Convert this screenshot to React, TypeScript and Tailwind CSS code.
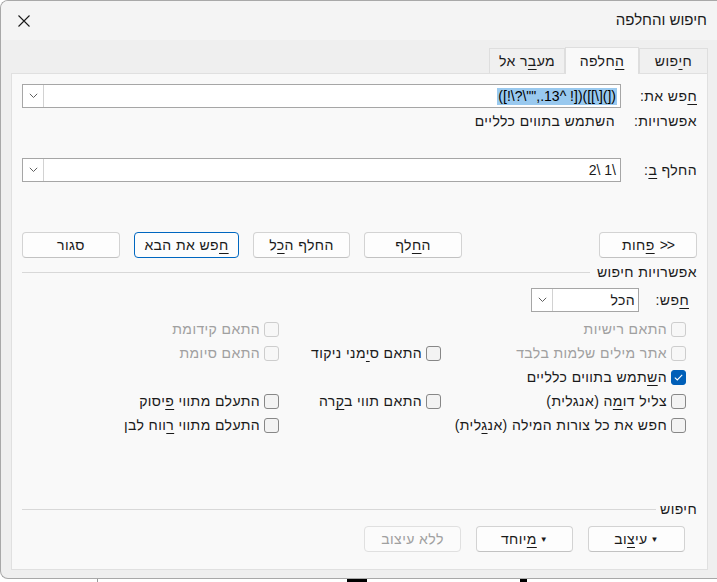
import React from "react";

function U({ children }: { children: React.ReactNode }) {
  return <span className="underline underline-offset-[3px] decoration-1">{children}</span>;
}

function Chevron() {
  return (
    <svg width="9" height="6" viewBox="0 0 9 6" fill="none">
      <path d="M0.8 0.8 L4.5 4.5 L8.2 0.8" stroke="#5f5f5f" strokeWidth="1" />
    </svg>
  );
}

function Combo({ children, className }: { children: React.ReactNode; className: string }) {
  return (
    <div className={`h-[24px] bg-white border border-[#a6a6a6] flex items-stretch ${className}`}>
      <div className="flex-1 flex items-center pr-[3px] overflow-hidden whitespace-nowrap">{children}</div>
      <div className="w-[21px] border-r border-[#d2d2d2] bg-white flex items-center justify-center">
        <Chevron />
      </div>
    </div>
  );
}

function Btn({
  children,
  className,
  focused,
  disabled,
}: {
  children: React.ReactNode;
  className: string;
  focused?: boolean;
  disabled?: boolean;
}) {
  const tone = focused
    ? "border-[#0067c0] bg-[#fdfdfd] text-[#1a1a1a]"
    : disabled
      ? "border-[#e0e0e0] bg-[#fbfbfb] text-[#a0a0a0]"
      : "border-[#d3d3d3] border-b-[#c2c2c2] bg-[#fdfdfd] text-[#1a1a1a]";
  return (
    <div className={`h-[26px] rounded-[4px] border flex items-center justify-center ${tone} ${className}`}>
      <span className="whitespace-nowrap">{children}</span>
    </div>
  );
}

function Check({
  label,
  checked,
  disabled,
}: {
  label: React.ReactNode;
  checked?: boolean;
  disabled?: boolean;
}) {
  const box = checked
    ? "bg-[#005fb8] border-[#005fb8]"
    : disabled
      ? "bg-[#f7f7f7] border-[#cdcdcd]"
      : "bg-[#f3f3f3] border-[#878787]";
  return (
    <div className="h-[24px] flex items-center gap-[4px]">
      <span className={`w-[15px] h-[15px] shrink-0 rounded-[3px] border flex items-center justify-center ${box}`}>
        {checked && (
          <svg width="9" height="7" viewBox="0 0 9 7" fill="none">
            <path d="M0.8 3.6 L3.3 6 L8.2 0.9" stroke="white" strokeWidth="1.1" />
          </svg>
        )}
      </span>
      <span className={`whitespace-nowrap ${disabled ? "text-[#a0a0a0]" : "text-[#1a1a1a]"}`}>{label}</span>
    </div>
  );
}

function Section({ title, gap }: { title: string; gap: string }) {
  return (
    <div className="h-[20px] flex items-center">
      <span className="text-[#1a1a1a]">{title}</span>
      <div className={`flex-1 h-px bg-[#d8d8d8] ${gap}`} />
    </div>
  );
}

export default function App() {
  return (
    <div
      dir="rtl"
      className="w-[717px] h-[582px] bg-white overflow-hidden flex flex-col text-[14px] tracking-[0.4px] font-['Liberation_Sans','DejaVu_Sans',sans-serif]"
    >
      <div className="h-[579px] bg-[#efefef] border border-r-0 border-[#a8a8a8] rounded-l-[8px] flex flex-col overflow-hidden">
        {/* title bar */}
        <div className="h-[39px] bg-[#f4f4f4] flex items-center justify-between pr-[10px] pl-[17px]">
          <span className="text-[15px] tracking-normal text-[#1a1a1a]">חיפוש והחלפה</span>
          <svg width="12" height="12" viewBox="0 0 12 12" fill="none">
            <path d="M0.5 0.5 L11.5 11.5 M11.5 0.5 L0.5 11.5" stroke="#1a1a1a" strokeWidth="1.1" />
          </svg>
        </div>

        {/* tabs */}
        <div className="h-[33px] flex items-end pr-[9px]">
          <div className="w-[69px] h-[25px] border border-b-0 border-[#dedede] bg-[#f0f0f0] flex items-center justify-center text-[#1a1a1a]">
            ח<U>י</U>פוש
          </div>
          <div className="w-[74px] h-[27px] border border-b-0 border-[#dedede] bg-[#f9f9f9] -mb-px relative z-10 flex items-center justify-center text-[#1a1a1a]">
            <U>ה</U>חלפה
          </div>
          <div className="w-[76px] h-[25px] border border-b-0 border-[#dedede] bg-[#f0f0f0] flex items-center justify-center text-[#1a1a1a]">
            מע<U>ב</U>ר אל
          </div>
        </div>

        {/* panel */}
        <div className="flex-1 mr-[9px] ml-[10px] mb-[8px] bg-[#f9f9f9] border border-[#e0e0e0] flex flex-col pr-[10px] pl-[10px] text-[#1a1a1a]">
          <div className="mt-[10px] flex items-center">
            <span className="w-[76px]">
              <U>ח</U>פש את:
            </span>
            <Combo className="flex-1">
              <bdo dir="ltr" className="bg-[#99c9ef] text-black px-px leading-[17px] tracking-normal">
                {'([!\\?\\"",.13^ !])([[\\](])'}
              </bdo>
            </Combo>
          </div>
          <div className="h-[26px] flex items-center">
            <span className="w-[76px]">אפשרויות:</span>
            <span className="pr-[6px]">השתמש בתווים כלליים</span>
          </div>
          <div className="mt-[24px] flex items-center">
            <span className="w-[76px]">
              החלף <U>ב</U>:
            </span>
            <Combo className="flex-1">
              <bdo dir="ltr" className="px-px tracking-normal">
                {"2\\ 1\\"}
              </bdo>
            </Combo>
          </div>

          {/* action buttons */}
          <div className="mt-[50px] flex justify-between">
            <div
              dir="ltr"
              className="w-[98px] h-[26px] rounded-[4px] border border-[#d3d3d3] border-b-[#c2c2c2] bg-[#fdfdfd] text-[#1a1a1a] flex items-center justify-center gap-[5px]"
            >
              <span dir="rtl">
                <U>פ</U>חות
              </span>
              <span className="tracking-[-1px]">{">>"}</span>
            </div>
            <div className="flex gap-[14px]">
              <Btn className="w-[98px]">
                ה<U>ח</U>לף
              </Btn>
              <Btn className="w-[97px]">
                החלף ה<U>כ</U>ל
              </Btn>
              <Btn className="w-[105px]" focused>
                <U>ח</U>פש את הבא
              </Btn>
              <Btn className="w-[98px]">סגור</Btn>
            </div>
          </div>

          <div className="mt-[4px]">
            <Section title="אפשרויות חיפוש" gap="mr-[7px]" />
          </div>

          <div className="mt-[6px] flex items-center pr-[8px]">
            <span className="w-[50px]">
              <U>ח</U>פש:
            </span>
            <Combo className="w-[108px]">
              <span>הכל</span>
            </Combo>
          </div>

          <div className="mt-[5px] mr-[11px] grid grid-cols-[245px_162px_1fr]">
            <Check label="התאם רישיות" disabled />
            <div />
            <Check label="התאם קידומת" disabled />

            <Check label="אתר מילים שלמות בלבד" disabled />
            <Check
              label={
                <>
                  התאם ס<U>י</U>מני ניקוד
                </>
              }
            />
            <Check label="התאם סיומת" disabled />

            <Check
              checked
              label={
                <>
                  ה<U>ש</U>תמש בתווים כלליים
                </>
              }
            />
            <div />
            <div />

            <Check
              label={
                <>
                  צליל דו<U>מ</U>ה (אנגלית)
                </>
              }
            />
            <Check
              label={
                <>
                  התאם תווי ב<U>ק</U>רה
                </>
              }
            />
            <Check
              label={
                <>
                  התעלם מתווי <U>פ</U>יסוק
                </>
              }
            />

            <Check
              label={
                <>
                  חפש את כל צורות המילה (אנ<U>ג</U>לית)
                </>
              }
            />
            <div />
            <Check
              label={
                <>
                  התעלם מתווי <U>ר</U>ווח לבן
                </>
              }
            />
          </div>

          <div className="mt-[62px]">
            <Section title="חיפוש" gap="mr-[4px]" />
          </div>

          <div className="mt-[7px] mr-[12px] flex gap-[15px]">
            <Btn className="w-[97px]">
              <span className="text-[8px] ml-[3px] align-middle">▼</span>
              עי<U>צ</U>וב
            </Btn>
            <Btn className="w-[97px]">
              <span className="text-[8px] ml-[3px] align-middle">▼</span>
              <U>מ</U>יוחד
            </Btn>
            <Btn className="w-[97px]" disabled>
              ללא עיצוב
            </Btn>
          </div>
        </div>
      </div>

      {/* what lies below the dialog */}
      <div dir="ltr" className="flex-1 flex">
        <div className="w-[97px]" />
        <div className="w-px bg-[#9a9a9a]" />
        <div className="w-[249px]" />
        <div className="w-[20px] bg-black" />
        <div className="w-[153px]" />
        <div className="w-[7px] bg-black" />
      </div>
    </div>
  );
}
